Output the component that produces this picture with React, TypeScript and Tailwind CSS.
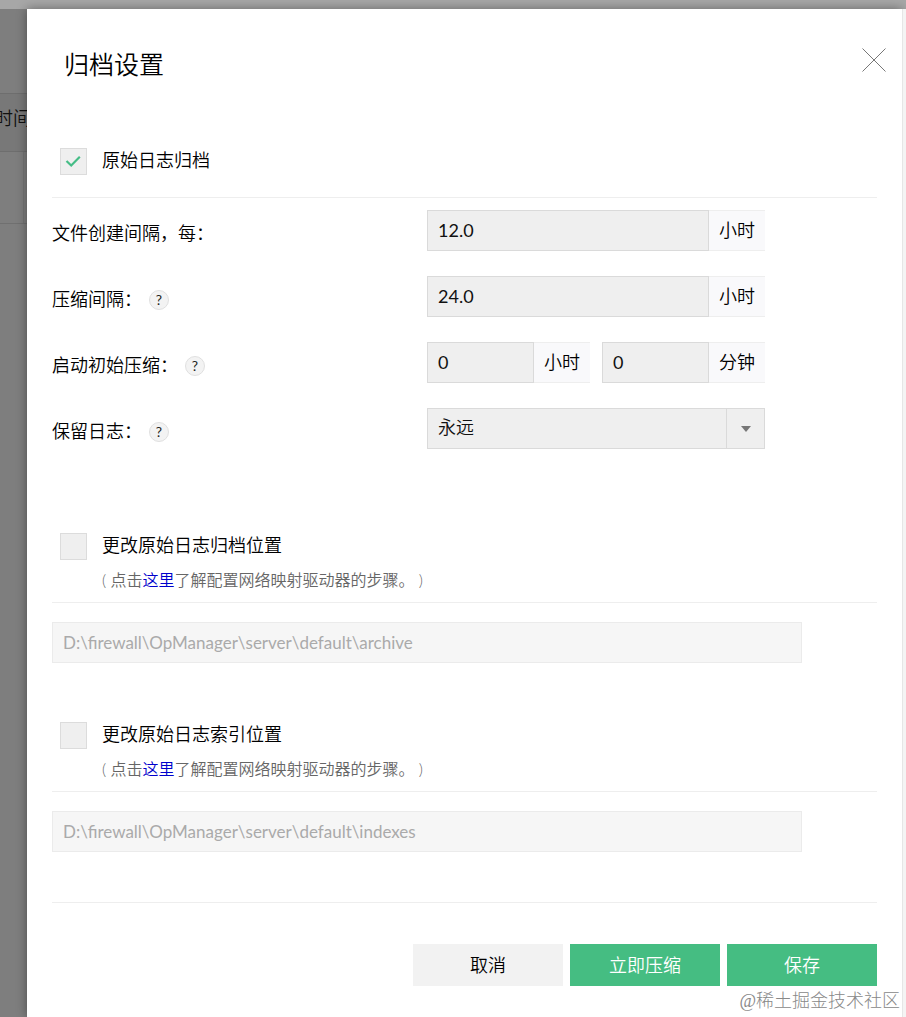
import { useId, useState } from "react";
import type { ReactNode } from "react";

const fieldBox = "h-[41px] min-w-0 border border-[#dadada] bg-[#efefef] px-[10px] pb-[2px] text-[18px] text-[#111] outline-none";

function CheckBox({ id, defaultChecked = false }: { id: string; defaultChecked?: boolean }) {
  const [checked, setChecked] = useState(defaultChecked);
  return (
    <span className="relative flex size-[27px] shrink-0">
      <input
        id={id}
        type="checkbox"
        checked={checked}
        onChange={(e) => setChecked(e.target.checked)}
        className="size-full appearance-none border border-[#dcdcdc] bg-[#efefef]"
      />
      {checked && (
        <svg viewBox="0 0 27 27" className="pointer-events-none absolute inset-0 size-full" fill="none">
          <path d="M6.5 13 L11.2 17.5 L19.8 8.8" stroke="#45bd86" strokeWidth="2.2" />
        </svg>
      )}
    </span>
  );
}

function Help({ label }: { label: string }) {
  return (
    <button
      type="button"
      aria-label={label}
      className="ml-[7px] flex size-5 items-center justify-center rounded-full border border-[#e0e0e0] bg-[#f3f3f3] text-[14px] leading-none font-normal text-[#222]"
    >
      ?
    </button>
  );
}

function Row({ id, label, help, children }: { id: string; label: string; help?: string; children: ReactNode }) {
  return (
    <div className="flex items-center">
      <div className="flex w-[375px] shrink-0 items-center pt-[6px]">
        <label htmlFor={id}>{label}</label>
        {help && <Help label={help} />}
      </div>
      <div className="flex w-[338px] gap-3">{children}</div>
    </div>
  );
}

function UnitInput({ id, value, unit, label }: { id?: string; value: string; unit: string; label?: string }) {
  return (
    <div className="flex min-w-0 flex-1">
      <input id={id} aria-label={label} defaultValue={value} className={`${fieldBox} w-0 flex-1 font-normal`} />
      <span className="flex w-[56px] items-center justify-center border-y border-[#eeeeee] bg-[#f9f9fb]">{unit}</span>
    </div>
  );
}

function LocationSection({ title, path }: { title: string; path: string }) {
  const id = useId();
  return (
    <section>
      <div className="flex items-center gap-[15px] pl-2">
        <CheckBox id={id} />
        <label htmlFor={id} className="pb-[2px]">
          {title}
        </label>
      </div>
      <p className="mt-[7px] border-b border-[#eeeeee] pb-[10px] pl-[50px] text-[16px] leading-6 text-[#666]">
        ( 点击
        <a href="#drive" className="text-[#0000cc]">
          这里
        </a>
        了解配置网络映射驱动器的步骤。 )
      </p>
      <input
        aria-label={title}
        defaultValue={path}
        disabled
        className="mt-[19px] block h-[41px] w-[750px] max-w-full border border-[#ebebeb] bg-[#f6f6f6] px-[10px] text-[17px] font-normal text-[#aaa]"
      />
    </section>
  );
}

export default function App() {
  return (
    <div className="flex min-h-screen flex-col bg-[#7e7e7e] font-['Lato','Noto_Sans_CJK_SC',sans-serif] text-[18px] leading-[27px] font-[350] text-black">
      <div className="h-[9px] bg-[#a7a7a7]" />
      <div className="flex flex-1">
        <aside className="w-[27px] shrink-0 overflow-hidden">
          <div className="h-[84px]" />
          <div className="flex h-[59px] items-center justify-end border-y border-[#6e6e6e] bg-[#787878] pb-2 whitespace-nowrap text-[#111]">
            <span className="-mr-1">时间</span>
          </div>
          <div className="mr-[3px] h-[71px] border-r border-[#747474]" />
          <div className="border-t border-[#707070]" />
        </aside>

        <main
          role="dialog"
          aria-labelledby="dialog-title"
          className="relative min-w-0 flex-1 bg-white px-[25px] shadow-[0_0_10px_rgba(0,0,0,0.4)]"
        >
          <header className="-mr-[10px] flex items-start justify-between pt-[37px] pr-px pl-3">
            <h1 id="dialog-title" className="text-[25px] leading-9">
              归档设置
            </h1>
            <button type="button" aria-label="关闭" className="mt-[2px] flex">
              <svg viewBox="0 0 24 24" className="size-6" fill="none" stroke="#777" strokeWidth="1">
                <path d="M0.5 0.5 L23.5 23.5 M23.5 0.5 L0.5 23.5" />
              </svg>
            </button>
          </header>

          <div className="mt-[65px] flex items-center gap-[15px] border-b border-[#eeeeee] pb-[21px] pl-2">
            <CheckBox id="archive" defaultChecked />
            <label htmlFor="archive" className="pb-[2px]">
              原始日志归档
            </label>
          </div>

          <div className="mt-3 flex flex-col gap-[25px]">
            <Row id="create" label="文件创建间隔，每：">
              <UnitInput id="create" value="12.0" unit="小时" />
            </Row>
            <Row id="zip" label="压缩间隔：" help="压缩间隔说明">
              <UnitInput id="zip" value="24.0" unit="小时" />
            </Row>
            <Row id="start" label="启动初始压缩：" help="启动初始压缩说明">
              <UnitInput id="start" value="0" unit="小时" />
              <UnitInput label="分钟" value="0" unit="分钟" />
            </Row>
            <Row id="keep" label="保留日志：" help="保留日志说明">
              <div className="relative flex flex-1">
                <select id="keep" className={`${fieldBox} flex-1 appearance-none`}>
                  <option>永远</option>
                </select>
                <span className="pointer-events-none absolute inset-y-px right-px flex w-[38px] items-center justify-center border-l border-[#dadada]">
                  <svg viewBox="0 0 10 6" className="h-[6px] w-[10px]" fill="#777">
                    <path d="M0 0h10L5 6z" />
                  </svg>
                </span>
              </div>
            </Row>
          </div>

          <div className="mt-[83px] flex flex-col gap-[58px]">
            <LocationSection title="更改原始日志归档位置" path="D:\firewall\OpManager\server\default\archive" />
            <LocationSection title="更改原始日志索引位置" path="D:\firewall\OpManager\server\default\indexes" />
          </div>

          <footer className="mt-[50px] flex justify-end gap-[7px] border-t border-[#eeeeee] pt-[41px]">
            <button type="button" className="h-[42px] w-[150px] bg-[#f2f2f2]">
              取消
            </button>
            <button type="button" className="h-[42px] w-[150px] bg-[#45bd82] text-white">
              立即压缩
            </button>
            <button type="button" className="h-[42px] w-[150px] bg-[#45bd82] text-white">
              保存
            </button>
          </footer>

          <span className="absolute right-[2px] bottom-[2px] font-['Liberation_Serif','Noto_Sans_CJK_SC',serif] text-[18px] font-light text-[#888]">
            @稀土掘金技术社区
          </span>
        </main>
        <div className="relative w-1 shrink-0 border-l border-[#e6e6e6] bg-[#f4f4f4]" />
      </div>
    </div>
  );
}
